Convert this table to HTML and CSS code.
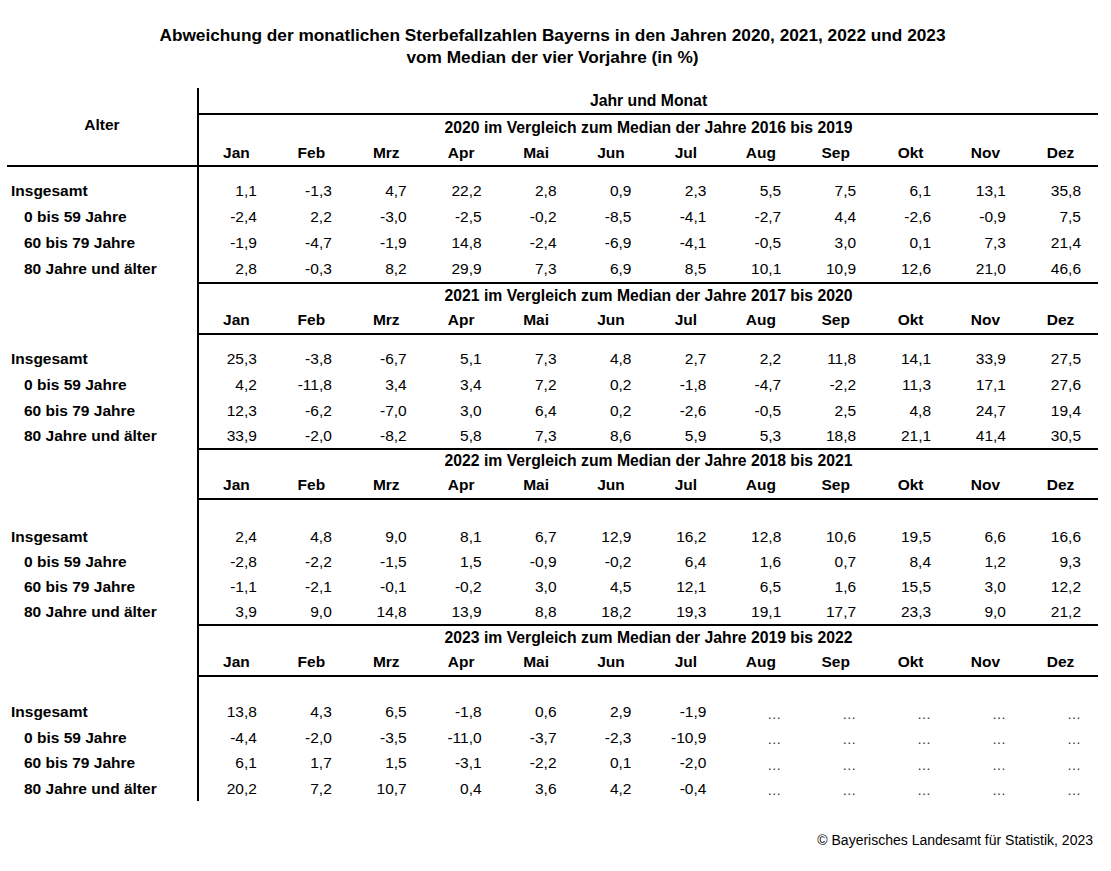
FILE: index.html
```html
<!DOCTYPE html>
<html lang="de">
<head>
<meta charset="utf-8">
<title>Abweichung der monatlichen Sterbefallzahlen Bayerns</title>
<link rel="stylesheet" href="styles.css">
</head>
<body>
<div class="page">
  <h1 class="title">Abweichung der monatlichen Sterbefallzahlen Bayerns in den Jahren 2020, 2021, 2022 und 2023<br>vom Median der vier Vorjahre (in %)</h1>
  <table class="tab">
    <colgroup><col class="c0"><col><col><col><col><col><col><col><col><col><col><col><col></colgroup>
    <tbody>
      <tr class="h27"><td class="stub alter ln" rowspan="3">Alter</td><td class="hd ln" colspan="12">Jahr und Monat</td></tr>
      <tr class="h25"><td class="hd" colspan="12">2020 im Vergleich zum Median der Jahre 2016 bis 2019</td></tr>
      <tr class="h27"><td class="m ln">Jan</td><td class="m ln">Feb</td><td class="m ln">Mrz</td><td class="m ln">Apr</td><td class="m ln">Mai</td><td class="m ln">Jun</td><td class="m ln">Jul</td><td class="m ln">Aug</td><td class="m ln">Sep</td><td class="m ln">Okt</td><td class="m ln">Nov</td><td class="m ln">Dez</td></tr>
      <tr class="h11"><td class="stub"></td><td colspan="12"></td></tr>
      <tr class="h26"><td class="stub lab">Insgesamt</td><td>1,1</td><td>-1,3</td><td>4,7</td><td>22,2</td><td>2,8</td><td>0,9</td><td>2,3</td><td>5,5</td><td>7,5</td><td>6,1</td><td>13,1</td><td>35,8</td></tr>
      <tr class="h26"><td class="stub lab sub">0 bis 59 Jahre</td><td>-2,4</td><td>2,2</td><td>-3,0</td><td>-2,5</td><td>-0,2</td><td>-8,5</td><td>-4,1</td><td>-2,7</td><td>4,4</td><td>-2,6</td><td>-0,9</td><td>7,5</td></tr>
      <tr class="h26"><td class="stub lab sub">60 bis 79 Jahre</td><td>-1,9</td><td>-4,7</td><td>-1,9</td><td>14,8</td><td>-2,4</td><td>-6,9</td><td>-4,1</td><td>-0,5</td><td>3,0</td><td>0,1</td><td>7,3</td><td>21,4</td></tr>
      <tr class="h28 lnrow"><td class="stub lab sub pb">80 Jahre und älter</td><td>2,8</td><td>-0,3</td><td>8,2</td><td>29,9</td><td>7,3</td><td>6,9</td><td>8,5</td><td>10,1</td><td>10,9</td><td>12,6</td><td>21,0</td><td>46,6</td></tr>

      <tr class="h23"><td class="stub"></td><td class="hd" colspan="12">2021 im Vergleich zum Median der Jahre 2017 bis 2020</td></tr>
      <tr class="h28 lnrow"><td class="stub pb"></td><td class="m">Jan</td><td class="m">Feb</td><td class="m">Mrz</td><td class="m">Apr</td><td class="m">Mai</td><td class="m">Jun</td><td class="m">Jul</td><td class="m">Aug</td><td class="m">Sep</td><td class="m">Okt</td><td class="m">Nov</td><td class="m">Dez</td></tr>
      <tr class="h11"><td class="stub"></td><td colspan="12"></td></tr>
      <tr class="h26"><td class="stub lab">Insgesamt</td><td>25,3</td><td>-3,8</td><td>-6,7</td><td>5,1</td><td>7,3</td><td>4,8</td><td>2,7</td><td>2,2</td><td>11,8</td><td>14,1</td><td>33,9</td><td>27,5</td></tr>
      <tr class="h26"><td class="stub lab sub">0 bis 59 Jahre</td><td>4,2</td><td>-11,8</td><td>3,4</td><td>3,4</td><td>7,2</td><td>0,2</td><td>-1,8</td><td>-4,7</td><td>-2,2</td><td>11,3</td><td>17,1</td><td>27,6</td></tr>
      <tr class="h25"><td class="stub lab sub">60 bis 79 Jahre</td><td>12,3</td><td>-6,2</td><td>-7,0</td><td>3,0</td><td>6,4</td><td>0,2</td><td>-2,6</td><td>-0,5</td><td>2,5</td><td>4,8</td><td>24,7</td><td>19,4</td></tr>
      <tr class="h27 lnrow"><td class="stub lab sub pb">80 Jahre und älter</td><td>33,9</td><td>-2,0</td><td>-8,2</td><td>5,8</td><td>7,3</td><td>8,6</td><td>5,9</td><td>5,3</td><td>18,8</td><td>21,1</td><td>41,4</td><td>30,5</td></tr>

      <tr class="h22"><td class="stub"></td><td class="hd" colspan="12">2022 im Vergleich zum Median der Jahre 2018 bis 2021</td></tr>
      <tr class="h28 lnrow"><td class="stub pb"></td><td class="m">Jan</td><td class="m">Feb</td><td class="m">Mrz</td><td class="m">Apr</td><td class="m">Mai</td><td class="m">Jun</td><td class="m">Jul</td><td class="m">Aug</td><td class="m">Sep</td><td class="m">Okt</td><td class="m">Nov</td><td class="m">Dez</td></tr>
      <tr class="h24"><td class="stub"></td><td colspan="12"></td></tr>
      <tr class="h25"><td class="stub lab">Insgesamt</td><td>2,4</td><td>4,8</td><td>9,0</td><td>8,1</td><td>6,7</td><td>12,9</td><td>16,2</td><td>12,8</td><td>10,6</td><td>19,5</td><td>6,6</td><td>16,6</td></tr>
      <tr class="h25"><td class="stub lab sub">0 bis 59 Jahre</td><td>-2,8</td><td>-2,2</td><td>-1,5</td><td>1,5</td><td>-0,9</td><td>-0,2</td><td>6,4</td><td>1,6</td><td>0,7</td><td>8,4</td><td>1,2</td><td>9,3</td></tr>
      <tr class="h25"><td class="stub lab sub">60 bis 79 Jahre</td><td>-1,1</td><td>-2,1</td><td>-0,1</td><td>-0,2</td><td>3,0</td><td>4,5</td><td>12,1</td><td>6,5</td><td>1,6</td><td>15,5</td><td>3,0</td><td>12,2</td></tr>
      <tr class="h27 lnrow"><td class="stub lab sub pb">80 Jahre und älter</td><td>3,9</td><td>9,0</td><td>14,8</td><td>13,9</td><td>8,8</td><td>18,2</td><td>19,3</td><td>19,1</td><td>17,7</td><td>23,3</td><td>9,0</td><td>21,2</td></tr>

      <tr class="h23"><td class="stub"></td><td class="hd" colspan="12">2023 im Vergleich zum Median der Jahre 2019 bis 2022</td></tr>
      <tr class="h28 lnrow"><td class="stub pb"></td><td class="m">Jan</td><td class="m">Feb</td><td class="m">Mrz</td><td class="m">Apr</td><td class="m">Mai</td><td class="m">Jun</td><td class="m">Jul</td><td class="m">Aug</td><td class="m">Sep</td><td class="m">Okt</td><td class="m">Nov</td><td class="m">Dez</td></tr>
      <tr class="h22"><td class="stub"></td><td colspan="12"></td></tr>
      <tr class="h26"><td class="stub lab">Insgesamt</td><td>13,8</td><td>4,3</td><td>6,5</td><td>-1,8</td><td>0,6</td><td>2,9</td><td>-1,9</td><td class="na">…</td><td class="na">…</td><td class="na">…</td><td class="na">…</td><td class="na">…</td></tr>
      <tr class="h25"><td class="stub lab sub">0 bis 59 Jahre</td><td>-4,4</td><td>-2,0</td><td>-3,5</td><td>-11,0</td><td>-3,7</td><td>-2,3</td><td>-10,9</td><td class="na">…</td><td class="na">…</td><td class="na">…</td><td class="na">…</td><td class="na">…</td></tr>
      <tr class="h26"><td class="stub lab sub">60 bis 79 Jahre</td><td>6,1</td><td>1,7</td><td>1,5</td><td>-3,1</td><td>-2,2</td><td>0,1</td><td>-2,0</td><td class="na">…</td><td class="na">…</td><td class="na">…</td><td class="na">…</td><td class="na">…</td></tr>
      <tr class="h25"><td class="stub lab sub">80 Jahre und älter</td><td>20,2</td><td>7,2</td><td>10,7</td><td>0,4</td><td>3,6</td><td>4,2</td><td>-0,4</td><td class="na">…</td><td class="na">…</td><td class="na">…</td><td class="na">…</td><td class="na">…</td></tr>
    </tbody>
  </table>
  <p class="source">© Bayerisches Landesamt für Statistik, 2023</p>
</div>
</body>
</html>
```

FILE: styles.css
```css
* { box-sizing: border-box; }

html, body {
  margin: 0;
  padding: 0;
  background: #ffffff;
}

body {
  font-family: "Liberation Sans", Arial, sans-serif;
  color: #000000;
}

.page {
  width: 1091px;
  margin-left: 7px;
  padding-top: 24px;
}

.title {
  margin: 0 0 20px 0;
  font-size: 17.25px;
  line-height: 22px;
  font-weight: bold;
  text-align: center;
}

.tab {
  width: 1091px;
  table-layout: fixed;
  border-collapse: separate;
  border-spacing: 0;
  font-size: 15.5px;
  line-height: 18px;
}

.c0 { width: 192px; }

.tab td {
  padding: 0 17px 0 0;
  text-align: right;
  vertical-align: middle;
  white-space: nowrap;
}

.h11 > td { height: 11px; }
.h22 > td { height: 22px; }
.h23 > td { height: 23px; }
.h24 > td { height: 24px; }
.h25 > td { height: 25px; }
.h26 > td { height: 26px; }
.h27 > td { height: 27px; }
.h28 > td { height: 28px; }

.tab td.stub {
  border-right: 2px solid #000;
  padding: 0;
  text-align: left;
  font-weight: bold;
}

.tab td.alter {
  text-align: center;
  padding-bottom: 3px;
}

.tab td.lab { padding-left: 4px; }
.tab td.sub { padding-left: 17px; }
.tab td.pb { padding-bottom: 2px; }

.tab td.ln,
.lnrow > td:not(.stub) {
  border-bottom: 2px solid #000;
}

.tab td.hd {
  text-align: center;
  font-weight: bold;
  font-size: 15.75px;
  padding: 0;
}

.tab td.m {
  text-align: center;
  font-weight: bold;
  padding: 0;
}

.tab td.na {
  color: #333333;
  font-size: 14px;
  vertical-align: bottom;
  padding-bottom: 2px;
}

.source {
  margin: 31px 5px 0 0;
  font-size: 14px;
  line-height: 16px;
  text-align: right;
}
```
